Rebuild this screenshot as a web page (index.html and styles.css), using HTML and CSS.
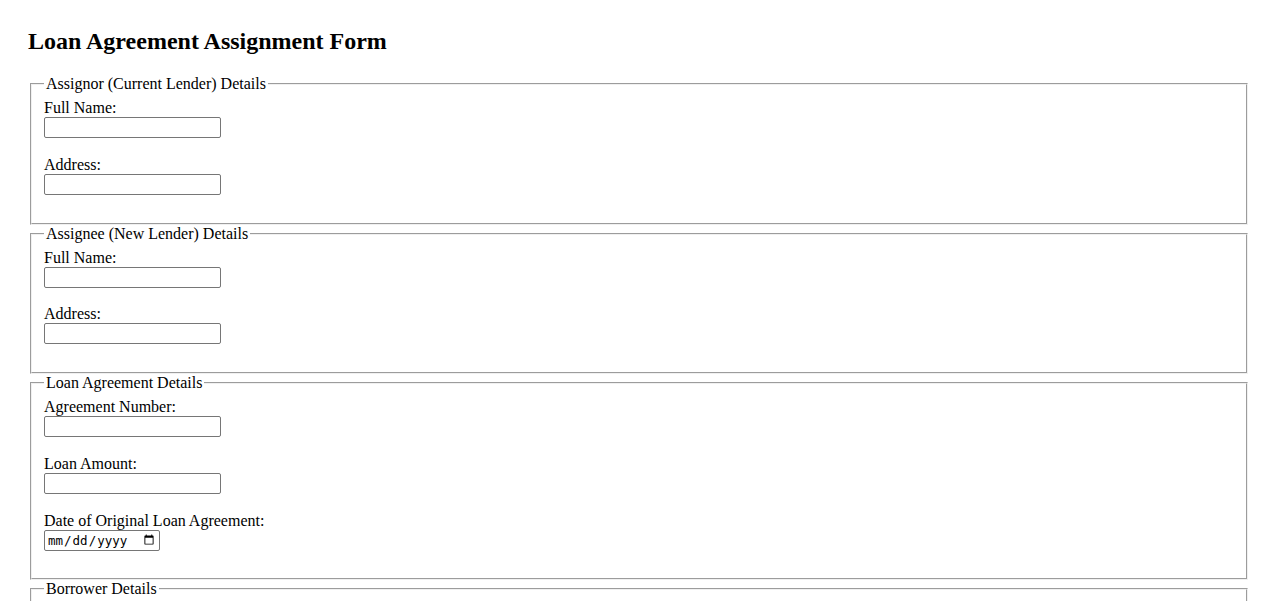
FILE: index.html
```html
<!DOCTYPE html>
<html lang="en">
<head>
<meta charset="utf-8">
<title>Loan Agreement Assignment Form</title>
<link rel="stylesheet" href="styles.css">
</head>
<body>
<h2 class="title">Loan Agreement Assignment Form</h2>
<form class="form">
  <fieldset class="section">
    <legend>Assignor (Current Lender) Details</legend>
    <div class="field">
      <label for="assignor-name">Full Name:</label>
      <input class="text" type="text" id="assignor-name">
    </div>
    <div class="field">
      <label for="assignor-address">Address:</label>
      <input class="text" type="text" id="assignor-address">
    </div>
  </fieldset>
  <fieldset class="section">
    <legend>Assignee (New Lender) Details</legend>
    <div class="field">
      <label for="assignee-name">Full Name:</label>
      <input class="text" type="text" id="assignee-name">
    </div>
    <div class="field">
      <label for="assignee-address">Address:</label>
      <input class="text" type="text" id="assignee-address">
    </div>
  </fieldset>
  <fieldset class="section">
    <legend>Loan Agreement Details</legend>
    <div class="field">
      <label for="agreement-number">Agreement Number:</label>
      <input class="text" type="text" id="agreement-number">
    </div>
    <div class="field">
      <label for="loan-amount">Loan Amount:</label>
      <input class="text" type="text" id="loan-amount">
    </div>
    <div class="field">
      <label for="loan-date">Date of Original Loan Agreement:</label>
      <input class="date" type="date" id="loan-date">
    </div>
  </fieldset>
  <fieldset class="section">
    <legend>Borrower Details</legend>
    <div class="field">
      <label for="borrower-name">Full Name:</label>
      <input class="text" type="text" id="borrower-name">
    </div>
    <div class="field">
      <label for="borrower-address">Address:</label>
      <input class="text" type="text" id="borrower-address">
    </div>
  </fieldset>
</form>
</body>
</html>
```

FILE: styles.css
```css
html {
  background: #ffffff;
}

body {
  margin: 0;
  padding: 27px 28px 28px 28px;
  font-family: "Liberation Serif", "Times New Roman", serif;
  font-size: 16px;
  color: #000000;
}

.title {
  margin: 0 0 20px 0;
  font-size: 24px;
  font-weight: bold;
  line-height: 28px;
}

.form {
  margin: 0;
}

.section {
  margin: 0 2px;
  padding: 6px 12px 10px 12px;
  border: 2px groove #f0f0f0;
}

.section legend {
  padding: 0 2px;
  line-height: 18px;
}

.field {
  margin-bottom: 17.75px;
}

.field label {
  display: block;
  line-height: 18px;
}

.text,
.date {
  display: block;
  box-sizing: border-box;
  height: 21px;
  margin: 0;
  border: 1px solid #767676;
  border-radius: 2px;
  background: #ffffff;
}

.text {
  width: 177px;
  padding: 1px 2px;
  font-family: "Liberation Sans", Arial, sans-serif;
  font-size: 13.33px;
}

.date {
  width: 116px;
  padding: 1px 2px;
  font-family: "DejaVu Sans Mono", monospace;
  font-size: 12.5px;
  color: #000000;
}
```
